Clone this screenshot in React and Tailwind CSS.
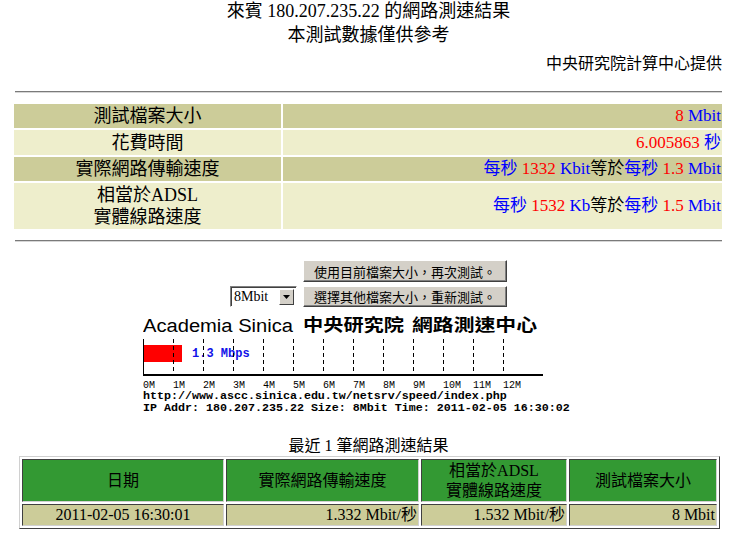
import React from "react";

// Speed test result page (ASCC netsrv)

const serif = "font-['Liberation_Serif','Noto_Sans_CJK_TC',serif]";
const cjkSans = "font-['Noto_Sans_CJK_TC',sans-serif]";

const Red = ({ children }) => <span className="text-[#ff0000]">{children}</span>;
const Blue = ({ children }) => <span className="text-[#0000ff]">{children}</span>;

const summary = [
  {
    label: "測試檔案大小",
    h: "h-[24px]",
    bg: "bg-[#cccc99]",
    value: (
      <>
        <Red>8</Red> <Blue>Mbit</Blue>
      </>
    ),
  },
  {
    label: "花費時間",
    h: "h-[25px]",
    bg: "bg-[#eeeecc]",
    value: (
      <>
        <Red>6.005863</Red> <Blue>秒</Blue>
      </>
    ),
  },
  {
    label: "實際網路傳輸速度",
    h: "h-[24px]",
    bg: "bg-[#cccc99]",
    value: (
      <>
        <Blue>每秒</Blue> <Red>1332</Red> <Blue>Kbit</Blue>等於<Blue>每秒</Blue> <Red>1.3</Red>{" "}
        <Blue>Mbit</Blue>
      </>
    ),
  },
  {
    label: (
      <>
        相當於ADSL
        <br />
        實體線路速度
      </>
    ),
    h: "h-[46px]",
    bg: "bg-[#eeeecc]",
    value: (
      <>
        <Blue>每秒</Blue> <Red>1532</Red> <Blue>Kb</Blue>等於<Blue>每秒</Blue> <Red>1.5</Red>{" "}
        <Blue>Mbit</Blue>
      </>
    ),
  },
];

function Rule() {
  return (
    <div className="ml-[15px] w-[707px] h-[2px] border-t border-t-[#7a7a7a] border-b border-b-[#d6d6d6]" />
  );
}

function WinButton({ children, h }) {
  return (
    <div
      className={`${h} flex items-center justify-center bg-[#d4d0c8] border border-t-white border-l-white border-r-[#404040] border-b-[#404040] shadow-[inset_-1px_-1px_0_#808080] text-[13px] leading-none text-black ${cjkSans}`}
    >
      {children}
    </div>
  );
}

function SizeSelect() {
  return (
    <div className="h-[21px] w-[67px] flex items-center justify-between bg-white border border-t-[#808080] border-l-[#808080] border-r-white border-b-white shadow-[inset_1px_1px_0_#404040] pl-[3px] pr-[2px]">
      <span className={`text-[14px] leading-none ${serif}`}>8Mbit</span>
      <span className="w-[15px] h-[16px] flex items-center justify-center bg-[#d4d0c8] border border-t-white border-l-white border-r-[#404040] border-b-[#404040]">
        <svg width="7" height="4" viewBox="0 0 7 4">
          <path d="M0 0h7L3.5 4z" fill="#000" />
        </svg>
      </span>
    </div>
  );
}

function SpeedChart() {
  const ticks = Array.from({ length: 12 }, (_, i) => (i + 1) * 30);
  const labels = Array.from({ length: 13 }, (_, i) => i);
  const mono = "'Liberation Mono', monospace";
  const cjk = "'Noto Sans CJK TC', sans-serif";
  return (
    <svg width="450" height="106" viewBox="0 0 450 106" className="block">
      <g transform="translate(0 4)">
        <text
          x="0"
          y="19"
          fontFamily="'Liberation Sans', sans-serif"
          fontSize="18"
          textLength="150"
          lengthAdjust="spacingAndGlyphs"
        >
          Academia Sinica
        </text>
        <text
          x="160"
          y="18"
          fontFamily={cjk}
          fontWeight="700"
          fontSize="17"
          textLength="101"
          lengthAdjust="spacingAndGlyphs"
        >
          中央研究院
        </text>
        <text
          x="269"
          y="18"
          fontFamily={cjk}
          fontWeight="700"
          fontSize="17"
          textLength="125"
          lengthAdjust="spacingAndGlyphs"
        >
          網路測速中心
        </text>

        <rect x="0" y="32" width="39" height="17" fill="#ff0000" />
        <text x="49" y="44" fontFamily={mono} fontWeight="700" fontSize="12" fill="#1010e8">
          1.3 Mbps
        </text>

        {ticks.map((x) => (
          <line
            key={x}
            x1={x + 0.5}
            y1="26"
            x2={x + 0.5}
            y2="61"
            stroke="#000"
            strokeWidth="1"
            strokeDasharray="4 3"
          />
        ))}
        <line x1="0.5" y1="26" x2="0.5" y2="62" stroke="#000" strokeWidth="1" />
        <line x1="0" y1="62" x2="400" y2="62" stroke="#000" strokeWidth="2" />

        {labels.map((n) => (
          <text key={n} x={n * 30} y="74.5" fontFamily={mono} fontSize="10">
            {n}M
          </text>
        ))}

        <text x="0" y="86" fontFamily={mono} fontWeight="700" fontSize="11.67">
          http://www.ascc.sinica.edu.tw/netsrv/speed/index.php
        </text>
        <text x="0" y="98" fontFamily={mono} fontWeight="700" fontSize="11.67">
          IP Addr: 180.207.235.22 Size: 8Mbit Time: 2011-02-05 16:30:02
        </text>
      </g>
    </svg>
  );
}

const cell =
  "border border-t-[#404040] border-l-[#404040] border-r-[#d0d0d0] border-b-[#d0d0d0] flex items-center";

export default function App() {
  return (
    <div className={`w-[737px] min-h-[536px] bg-white text-black ${serif}`}>
      {/* Heading */}
      <div className="text-center text-[18px]">
        <div className="h-[22px] leading-[22px]">來賓 180.207.235.22 的網路測速結果</div>
        <div className="h-[26px] leading-[26px]">本測試數據僅供參考</div>
      </div>
      <div className="mt-[4px] pr-[15px] text-right text-[16px] leading-[24px]">
        中央研究院計算中心提供
      </div>

      <div className="mt-[15px]">
        <Rule />
      </div>

      {/* Summary */}
      <div className="mt-[11px] ml-[14px] grid grid-cols-[267px_439px] gap-[2px]">
        {summary.map((row, i) => (
          <React.Fragment key={i}>
            <div
              className={`${row.h} ${row.bg} flex items-center justify-center text-center text-[18px] leading-[22px]`}
            >
              <div>{row.label}</div>
            </div>
            <div
              className={`${row.h} ${row.bg} flex items-center justify-end pr-[1px] whitespace-nowrap text-[17px]`}
            >
              <div>{row.value}</div>
            </div>
          </React.Fragment>
        ))}
      </div>

      <div className="mt-[11px]">
        <Rule />
      </div>

      {/* Retest controls */}
      <div className="mt-[18px] flex justify-center">
        <div className="grid grid-cols-[67px_204px] gap-x-[6px] gap-y-[4px]">
          <div />
          <WinButton h="h-[22px]">使用目前檔案大小，再次測試。</WinButton>
          <div className="flex items-end">
            <SizeSelect />
          </div>
          <WinButton h="h-[21px]">選擇其他檔案大小，重新測試。</WinButton>
        </div>
      </div>

      <div className="mt-[2px] ml-[143px]">
        <SpeedChart />
      </div>

      {/* History */}
      <div className="mt-[21px] h-[20px] leading-[20px] text-center text-[16px]">最近 1 筆網路測速結果</div>
      <div className="ml-[19px] w-[701px] p-[2px] border border-t-[#d0d0d0] border-l-[#d0d0d0] border-r-[#404040] border-b-[#404040] text-[16px]">
        <div className="grid grid-cols-[202px_193px_146px_148px] gap-[2px]">
          <div className={`${cell} h-[43px] bg-[#339933] justify-center`}>日期</div>
          <div className={`${cell} h-[43px] bg-[#339933] justify-center`}>實際網路傳輸速度</div>
          <div className={`${cell} h-[43px] bg-[#339933] justify-center text-center leading-[20px]`}>
            <div>
              相當於ADSL
              <br />
              實體線路速度
            </div>
          </div>
          <div className={`${cell} h-[43px] bg-[#339933] justify-center`}>測試檔案大小</div>

          <div className={`${cell} h-[22px] bg-[#cccc99] justify-center`}>2011-02-05 16:30:01</div>
          <div className={`${cell} h-[22px] bg-[#cccc99] justify-end pr-[1px]`}>1.332 Mbit/秒</div>
          <div className={`${cell} h-[22px] bg-[#cccc99] justify-end pr-[1px]`}>1.532 Mbit/秒</div>
          <div className={`${cell} h-[22px] bg-[#cccc99] justify-end pr-[1px]`}>8 Mbit</div>
        </div>
      </div>
    </div>
  );
}
